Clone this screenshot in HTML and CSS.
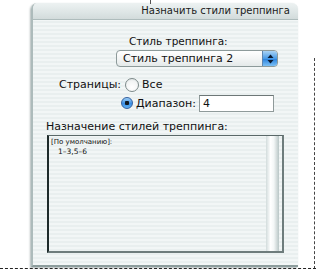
FILE: index.html
```html
<!DOCTYPE html>
<html lang="ru">
<head>
    <meta charset="UTF-8">
    <title>Назначить стили треппинга</title>
    <link rel="stylesheet" href="styles.css">
</head>
<body>
<div class="stage">
    <div class="guide-top"></div>
    <div class="guide-right"></div>
    <div class="guide-bottom"></div>

    <div class="window">
        <div class="titlebar">Назначить стили треппинга</div>
        <div class="content">
            <div class="style-label">Стиль треппинга:</div>
            <div class="popup">
                <span class="popup-text">Стиль треппинга 2</span>
                <span class="popup-arrows">
                    <svg width="7" height="10" viewBox="0 0 7 10">
                        <path d="M3.5 0.5 L6.5 4 L0.5 4 Z" fill="#0a1a30"/>
                        <path d="M3.5 9.5 L6.5 6 L0.5 6 Z" fill="#0a1a30"/>
                    </svg>
                </span>
            </div>

            <div class="pages-row">
                <span class="pages-label">Страницы:</span>
                <span class="radio"></span>
                <span class="radio-text">Все</span>
            </div>
            <div class="range-row">
                <span class="radio checked"></span>
                <span class="radio-text">Диапазон:</span>
                <span class="field">4</span>
            </div>

            <div class="list-label">Назначение стилей треппинга:</div>
            <div class="listbox">
                <div class="list-items">
                    <div class="item-head">[По умолчанию]:</div>
                    <div class="item-range">1–3,5–6</div>
                </div>
                <div class="scrollbar"></div>
            </div>
        </div>
    </div>
</div>
</body>
</html>
```

FILE: styles.css
```css
* {
    box-sizing: border-box;
}

body {
    margin: 0;
    background: #ffffff;
    font-family: "DejaVu Sans", sans-serif;
    color: #111111;
}

.stage {
    position: relative;
    width: 316px;
    height: 270px;
    padding: 3px 0 0 31px;
}

.guide-top {
    position: absolute;
    left: 150px;
    top: 0;
    height: 4px;
    border-left: 1px dashed #555555;
}

.guide-right {
    position: absolute;
    left: 314px;
    top: 58px;
    height: 211px;
    border-left: 1px dashed #444444;
}

.guide-bottom {
    position: absolute;
    left: 0;
    top: 268px;
    width: 316px;
    border-top: 1px dashed #222222;
}

.window {
    width: 267px;
    height: 264px;
    border-radius: 6px 6px 0 0;
    border-left: 2px solid #adbbbb;
    border-bottom: 2px solid #8c9c9c;
    box-shadow: -1px 1px 2px rgba(80, 100, 100, 0.45);
    background: repeating-linear-gradient(180deg, #f2f6f6 0, #f2f6f6 2px, #e9efef 2px, #e9efef 4px);
    overflow: hidden;
}

.titlebar {
    height: 17px;
    padding-right: 8px;
    text-align: right;
    font-size: 10px;
    line-height: 16px;
    color: #1a1a1a;
    background: linear-gradient(180deg, #edf2f2 0%, #dde5e5 60%, #d2dbdb 100%);
    border-bottom: 1px solid #aebcbc;
}

.content {
    padding-top: 15px;
}

.style-label {
    padding-left: 96px;
    font-size: 10.5px;
    line-height: 13px;
}

.popup {
    display: flex;
    align-items: center;
    margin: 2px 0 0 83px;
    width: 162px;
    height: 17px;
    border: 1px solid #8d9a9a;
    border-radius: 4px;
    background: linear-gradient(180deg, #ffffff 0%, #f3f5f5 50%, #e4e9e9 100%);
    overflow: hidden;
}

.popup-text {
    flex: 1;
    padding-left: 6px;
    font-size: 11px;
    line-height: 15px;
}

.popup-arrows {
    display: flex;
    align-items: center;
    justify-content: center;
    width: 15px;
    height: 100%;
    background: linear-gradient(180deg, #a9d3f5 0%, #4a9be6 50%, #2d84de 55%, #7cc0f4 100%);
    border-left: 1px solid #5e86b0;
}

.pages-row {
    display: flex;
    align-items: center;
    margin-top: 10px;
    padding-left: 26px;
    height: 15px;
}

.pages-label {
    font-size: 11px;
    margin-right: 4px;
}

.radio {
    width: 14px;
    height: 14px;
    border-radius: 50%;
    border: 1px solid #7d8a8a;
    background: radial-gradient(circle at 50% 70%, #ffffff 0%, #f2f4f4 60%, #d4dada 100%);
    margin-right: 3px;
    flex: none;
}

.radio.checked {
    width: 12px;
    height: 12px;
    border-color: #3461a0;
    background: radial-gradient(circle, #101820 0, #101820 2px, transparent 2.5px),
                linear-gradient(180deg, #9fd0f7 0%, #3b8fe4 55%, #5fb0f2 100%);
}

.radio-text {
    font-size: 11px;
}

.range-row {
    display: flex;
    align-items: center;
    margin-top: 2px;
    padding-left: 88px;
    height: 18px;
}

.range-row .radio-text {
    width: 63px;
}

.field {
    width: 75px;
    height: 17px;
    padding-left: 3px;
    border: 1px solid #8f9a9a;
    border-top-color: #6d7777;
    background: #ffffff;
    font-size: 11px;
    line-height: 15px;
}

.list-label {
    margin-top: 8px;
    padding-left: 13px;
    font-size: 11px;
    line-height: 13px;
}

.listbox {
    display: flex;
    margin: 2px 0 0 14px;
    width: 237px;
    height: 118px;
    border-left: 2px solid #1e2b2b;
    border-top: 1px solid #5a6868;
    border-right: 2px solid #6e7c7c;
    border-bottom: 2px solid #6e7c7c;
}

.list-items {
    flex: 1;
    padding: 2px 0 0 2px;
}

.item-head {
    font-size: 7px;
    line-height: 9px;
}

.item-range {
    padding-left: 7px;
    font-size: 7.5px;
    line-height: 10px;
}

.scrollbar {
    width: 13px;
    margin-right: 3px;
    background: linear-gradient(90deg, #d2dcdc 0%, #ffffff 35%, #f4f7f7 60%, #b9c6c6 100%);
}
```
